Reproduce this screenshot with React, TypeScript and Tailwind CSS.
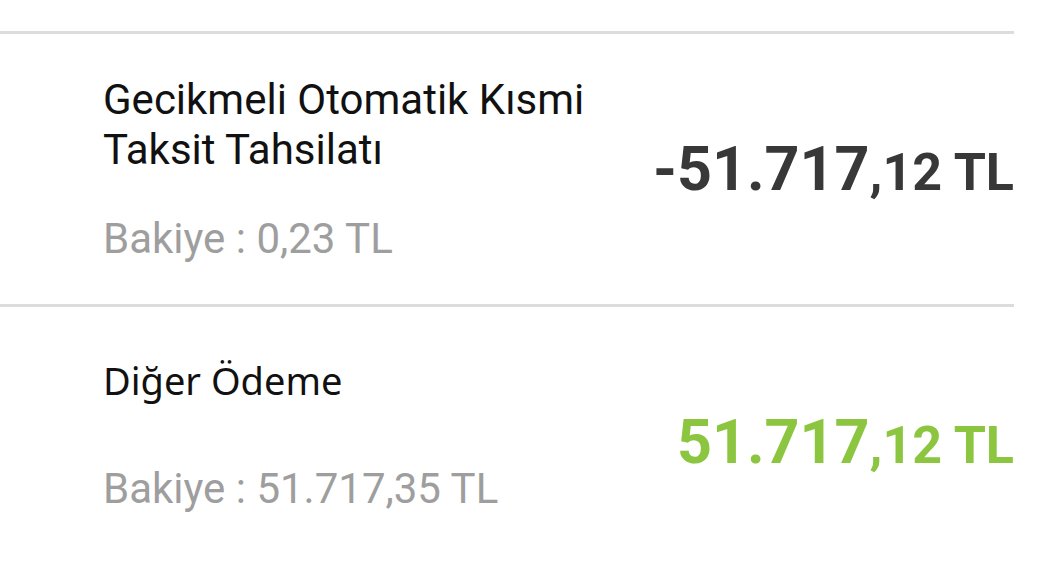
const rows = [
  {
    id: '1',
    title: 'Gecikmeli Otomatik Kısmi Taksit Tahsilatı',
    balance: 'Bakiye : 0,23 TL',
    whole: '-51.717',
    cents: ',12 TL',
    tone: 'text-[#383838]',
  },
  {
    id: '2',
    title: 'Diğer Ödeme',
    balance: 'Bakiye : 51.717,35 TL',
    whole: '51.717',
    cents: ',12 TL',
    tone: 'text-[#8cc640]',
  },
];

export default function App() {
  const [first, second] = rows;

  return (
    <div className="h-[565px] w-full overflow-hidden bg-white pt-[31px] font-['Roboto',sans-serif]">
      <div className="w-[1014px]">
        <div className="h-[3px] bg-[#dcdcdc]" />

        {/* first transaction */}
        <div className="flex h-[270px] justify-between pl-[103px]">
          <div className="flex flex-col pt-[41px]">
            <p className="w-[500px] text-[42px] leading-[50px] text-[#111]">{first.title}</p>
            <p className="mt-[39px] text-[42px] leading-[50px] text-[#9e9e9e]">{first.balance}</p>
          </div>
          <div className={`flex items-baseline self-center font-bold ${first.tone}`}>
            <span className="text-[61px] leading-none">{first.whole}</span>
            <span className="text-[52px] leading-none">{first.cents}</span>
          </div>
        </div>

        <div className="h-[3px] bg-[#dcdcdc]" />

        {/* second transaction */}
        <div className="flex h-[270px] justify-between pl-[103px]">
          <div className="flex flex-col pt-[48px]">
            <p className="font-['Noto_Sans',sans-serif] text-[38px] leading-[50px] text-[#111]">{second.title}</p>
            <p className="mt-[59px] text-[42px] leading-[50px] text-[#9e9e9e]">{second.balance}</p>
          </div>
          <div className={`flex items-baseline self-center font-bold ${second.tone}`}>
            <span className="text-[61px] leading-none">{second.whole}</span>
            <span className="text-[52px] leading-none">{second.cents}</span>
          </div>
        </div>
      </div>
    </div>
  );
}
